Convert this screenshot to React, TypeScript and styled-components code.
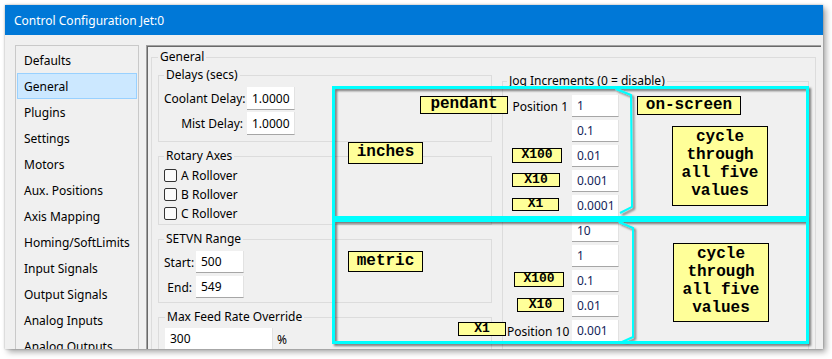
import React from 'react';
import styled, { createGlobalStyle } from 'styled-components';

const Global = createGlobalStyle`
  html, body { margin: 0; padding: 0; background: #ffffff; }
  body { font-family: "Noto Sans", "Open Sans", sans-serif; font-size: 12px; color: #000; }
  * { box-sizing: border-box; }
`;

const Page = styled.div`
  width: 832px;
  height: 359px;
  padding: 5px;
  overflow: hidden;
`;

const Window = styled.div`
  position: relative;
  width: 818px;
  height: 344px;
  background: #f0f0f0;
  box-shadow: 0 0 2px rgba(0, 0, 0, 0.3), 3px 3px 6px rgba(0, 0, 0, 0.35);
  overflow: hidden;
  display: flex;
  flex-direction: column;
`;

const TitleBar = styled.div`
  height: 30px;
  flex: none;
  background: #0078d7;
  color: #fff;
  display: flex;
  align-items: center;
  padding-left: 9px;
  font-size: 12px;
`;

const Body = styled.div`
  flex: 1;
  min-height: 0;
  display: flex;
  gap: 7px;
  padding: 10px 2px 0 10px;
`;

const List = styled.div`
  width: 124px;
  height: 330px;
  flex: none;
  border: 1px solid #c9c9c9;
  padding: 1px;
  display: flex;
  flex-direction: column;
`;

const ListItem = styled.div<{ $sel?: boolean }>`
  height: 26px;
  flex: none;
  display: flex;
  align-items: center;
  padding-left: ${(p) => (p.$sel ? 6 : 7)}px;
  background: ${(p) => (p.$sel ? '#cce8ff' : 'transparent')};
  border: ${(p) => (p.$sel ? '1px solid #99d1ff' : 'none')};
  white-space: nowrap;
`;

const Panel = styled.div`
  flex: 1;
  min-width: 0;
  border-top: 1px solid #a0a0a0;
  border-left: 1px solid #a0a0a0;
  box-shadow: inset 1px 1px 0 #696969;
  padding: 3px 5px 0 4px;
  display: flex;
`;

const Group = styled.fieldset<{ $pl?: number; $pt?: number; $pb?: number }>`
  margin: 0;
  min-width: 0;
  border: 1px solid #dcdcdc;
  padding: ${(p) => p.$pt ?? 2}px 5px ${(p) => p.$pb ?? 0}px ${(p) => p.$pl ?? 5}px;
`;

const GeneralGroup = styled(Group)`
  flex: 1;
  height: 320px;
`;

const Legend = styled.legend`
  padding: 0 2px;
  line-height: 16px;
  font-size: 12px;
`;

const Columns = styled.div`
  display: flex;
  gap: 10px;
  align-items: flex-start;
`;

const LeftCol = styled.div`
  width: 334px;
  flex: none;
  display: flex;
  flex-direction: column;
  gap: 6px;
`;

const JogGroup = styled(Group)`
  width: 307px;
  margin-top: 6px;
  height: 290px;
`;

const Rows = styled.div<{ $gap: number }>`
  display: flex;
  flex-direction: column;
  gap: ${(p) => p.$gap}px;
`;

const Row = styled.div<{ $h: number }>`
  height: ${(p) => p.$h}px;
  display: flex;
  align-items: center;
  gap: 4px;
`;

const Label = styled.div<{ $w: number }>`
  width: ${(p) => p.$w}px;
  flex: none;
  text-align: right;
  white-space: nowrap;
`;

const Field = styled.div<{ $w: number; $h: number; $navy?: boolean }>`
  width: ${(p) => p.$w}px;
  height: ${(p) => p.$h}px;
  flex: none;
  background: #fff;
  border-bottom: 1px solid #a6a6a6;
  border-right: 1px solid #e2e2e2;
  padding-left: 5px;
  display: flex;
  align-items: center;
  color: ${(p) => (p.$navy ? '#141e5a' : '#000')};
`;

const Check = styled.div`
  width: 13px;
  height: 13px;
  flex: none;
  border: 1px solid #333;
  border-radius: 2px;
  background: #fbfbfb;
`;

const CheckRow = styled.div`
  height: 19px;
  display: flex;
  align-items: center;
  gap: 4px;
`;

const Overlay = styled.svg`
  position: absolute;
  left: 0;
  top: 0;
  width: 818px;
  height: 344px;
  pointer-events: none;
`;

const Tag = styled.div<{ $x: number; $y: number; $w: number; $h: number; $fs?: number }>`
  position: absolute;
  left: ${(p) => p.$x}px;
  top: ${(p) => p.$y}px;
  width: ${(p) => p.$w}px;
  height: ${(p) => p.$h}px;
  background: #ffff99;
  border: 1px solid #000;
  font-family: "Liberation Mono", "Courier New", monospace;
  font-weight: bold;
  font-size: ${(p) => p.$fs ?? 16}px;
  display: flex;
  align-items: center;
  justify-content: center;
  line-height: 1;
  white-space: nowrap;
  padding-bottom: 2px;
`;

const Note = styled(Tag)`
  white-space: pre-line;
  text-align: center;
  line-height: 18px;
  align-items: flex-start;
  padding-top: 1px;
`;

const navItems = [
  'Defaults',
  'General',
  'Plugins',
  'Settings',
  'Motors',
  'Aux. Positions',
  'Axis Mapping',
  'Homing/SoftLimits',
  'Input Signals',
  'Output Signals',
  'Analog Inputs',
  'Analog Outputs',
];

const jogValues = ['1', '0.1', '0.01', '0.001', '0.0001', '10', '1', '0.1', '0.01', '0.001'];

export default function App() {
  return (
    <Page>
      <Global />
      <Window>
        <TitleBar>Control Configuration Jet:0</TitleBar>
        <Body>
          <List>
            {navItems.map((n) => (
              <ListItem key={n} $sel={n === 'General'}>
                {n}
              </ListItem>
            ))}
          </List>
          <Panel>
            <GeneralGroup $pl={6} $pt={2}>
              <Legend>General</Legend>
              <Columns>
                <LeftCol>
                  <Group $pt={4} $pb={6}>
                    <Legend>Delays (secs)</Legend>
                    <Rows $gap={2}>
                      <Row $h={23}>
                        <Label $w={79}>Coolant Delay:</Label>
                        <Field $w={48} $h={23}>1.0000</Field>
                      </Row>
                      <Row $h={23}>
                        <Label $w={79}>Mist Delay:</Label>
                        <Field $w={48} $h={23}>1.0000</Field>
                      </Row>
                    </Rows>
                  </Group>
                  <Group $pt={2} $pb={1}>
                    <Legend>Rotary Axes</Legend>
                    {['A', 'B', 'C'].map((a) => (
                      <CheckRow key={a}>
                        <Check />
                        {a} Rollover
                      </CheckRow>
                    ))}
                  </Group>
                  <Group $pt={4} $pb={4}>
                    <Legend>SETVN Range</Legend>
                    <Rows $gap={3}>
                      <Row $h={22}>
                        <Label $w={28}>Start:</Label>
                        <Field $w={48} $h={22}>500</Field>
                      </Row>
                      <Row $h={22}>
                        <Label $w={28}>End:</Label>
                        <Field $w={48} $h={22}>549</Field>
                      </Row>
                    </Rows>
                  </Group>
                  <Group $pt={3} $pb={4} $pl={6}>
                    <Legend>Max Feed Rate Override</Legend>
                    <Row $h={22}>
                      <Field $w={108} $h={22}>300</Field>
                      %
                    </Row>
                  </Group>
                </LeftCol>
                <JogGroup $pt={6} $pl={4}>
                  <Legend>Jog Increments (0 = disable)</Legend>
                  <Rows $gap={3}>
                    {jogValues.map((v, i) => (
                      <Row $h={22} key={i}>
                        <Label $w={61}>{i === 0 ? 'Position 1' : i === 9 ? 'Position 10' : ''}</Label>
                        <Field $w={47} $h={22} $navy>
                          {v}
                        </Field>
                      </Row>
                    ))}
                  </Rows>
                </JogGroup>
              </Columns>
            </GeneralGroup>
          </Panel>
        </Body>

        <Overlay viewBox="0 0 818 344">
          <defs>
            <filter id="sh" x="-5%" y="-5%" width="110%" height="110%">
              <feDropShadow dx="2" dy="2" stdDeviation="0.9" floodColor="#000" floodOpacity="0.5" />
            </filter>
          </defs>
          <g filter="url(#sh)" fill="none" stroke="#00ffff">
            <rect x="328.5" y="82.5" width="474" height="130" strokeWidth="3" />
            <rect x="328.5" y="215.5" width="474" height="122" strokeWidth="3" />
            <polyline points="611,84 626,90 627,202 615,208" strokeWidth="2" />
            <polyline points="614,217 628,223 628,332 617,337" strokeWidth="2" />
          </g>
        </Overlay>

        <Tag $x={415} $y={91} $w={88} $h={18}>pendant</Tag>
        <Tag $x={632} $y={91} $w={104} $h={19}>on-screen</Tag>
        <Tag $x={343} $y={137} $w={75} $h={22}>inches</Tag>
        <Tag $x={507} $y={143} $w={50} $h={15} $fs={13}>X100</Tag>
        <Tag $x={507} $y={168} $w={48} $h={14} $fs={13}>X10</Tag>
        <Tag $x={507} $y={193} $w={47} $h={13} $fs={13}>X1</Tag>
        <Note $x={667} $y={121} $w={96} $h={80}>{'cycle\nthrough\nall five\nvalues'}</Note>
        <Tag $x={343} $y={246} $w={75} $h={21}>metric</Tag>
        <Tag $x={509} $y={267} $w={50} $h={15} $fs={13}>X100</Tag>
        <Tag $x={512} $y={293} $w={47} $h={14} $fs={13}>X10</Tag>
        <Tag $x={453} $y={317} $w={48} $h={14} $fs={13}>X1</Tag>
        <Note $x={668} $y={238} $w={96} $h={79}>{'cycle\nthrough\nall five\nvalues'}</Note>
      </Window>
    </Page>
  );
}
